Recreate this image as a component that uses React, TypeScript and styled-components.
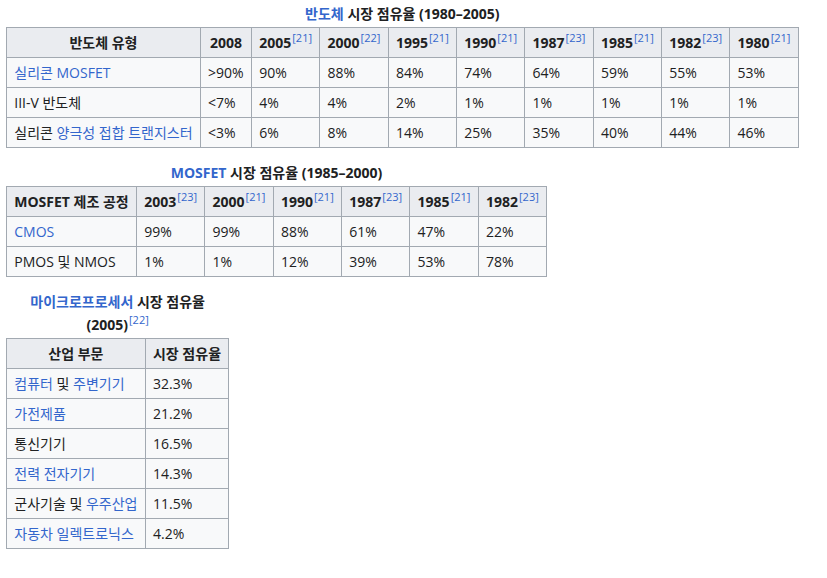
import styled, { createGlobalStyle } from "styled-components";

const GlobalStyle = createGlobalStyle`
  body {
    margin: 0;
    background: #ffffff;
    color: #202122;
    font-family: "Open Sans", "Noto Sans CJK KR", sans-serif;
    font-size: 14px;
  }
`;

const Page = styled.div`
  padding: 2px 6px 0;
  display: flex;
  flex-direction: column;
  align-items: flex-start;
  gap: 13px;
`;

const Table = styled.table`
  border-collapse: collapse;
  background: #f8f9fa;
  color: #202122;
  border: 1px solid #a2a9b1;
`;

const Caption = styled.caption`
  font-weight: bold;
  line-height: 23px;
  padding-bottom: 2px;
  text-align: center;
`;

const CaptionLine = styled.span`
  display: block;
  white-space: nowrap;
`;

const Th = styled.th`
  background: #eaecf0;
  border: 1px solid #a2a9b1;
  padding: 4px 7.25px;
  line-height: 21px;
  text-align: center;
  font-weight: bold;
  white-space: nowrap;
`;

const Td = styled.td`
  border: 1px solid #a2a9b1;
  padding: 4px 7.25px;
  line-height: 21px;
  text-align: left;
  white-space: nowrap;
`;

const Link = styled.span`
  color: #3366cc;
`;

const Ref = styled.sup`
  color: #3366cc;
  font-size: 11px;
  font-weight: normal;
  line-height: 1;
  vertical-align: super;
  margin-left: 1px;
`;

type Label = { text: string; link?: boolean }[];

const Cell = ({ parts }: { parts: Label }) => (
  <>
    {parts.map((p, i) =>
      p.link ? <Link key={i}>{p.text}</Link> : <span key={i}>{p.text}</span>
    )}
  </>
);

const Year = ({ year, refNo }: { year: string; refNo?: string }) => (
  <>
    {year}
    {refNo && <Ref>[{refNo}]</Ref>}
  </>
);

const semiYears = [
  ["2008", ""],
  ["2005", "21"],
  ["2000", "22"],
  ["1995", "21"],
  ["1990", "21"],
  ["1987", "23"],
  ["1985", "21"],
  ["1982", "23"],
  ["1980", "21"],
];

const semiRows: { label: Label; values: string[] }[] = [
  {
    label: [{ text: "실리콘 MOSFET", link: true }],
    values: [">90%", "90%", "88%", "84%", "74%", "64%", "59%", "55%", "53%"],
  },
  {
    label: [{ text: "III-V 반도체" }],
    values: ["<7%", "4%", "4%", "2%", "1%", "1%", "1%", "1%", "1%"],
  },
  {
    label: [{ text: "실리콘 " }, { text: "양극성 접합 트랜지스터", link: true }],
    values: ["<3%", "6%", "8%", "14%", "25%", "35%", "40%", "44%", "46%"],
  },
];

const mosYears = [
  ["2003", "23"],
  ["2000", "21"],
  ["1990", "21"],
  ["1987", "23"],
  ["1985", "21"],
  ["1982", "23"],
];

const mosRows: { label: Label; values: string[] }[] = [
  {
    label: [{ text: "CMOS", link: true }],
    values: ["99%", "99%", "88%", "61%", "47%", "22%"],
  },
  {
    label: [{ text: "PMOS 및 NMOS" }],
    values: ["1%", "1%", "12%", "39%", "53%", "78%"],
  },
];

const cpuRows: { label: Label; value: string }[] = [
  {
    label: [
      { text: "컴퓨터", link: true },
      { text: " 및 " },
      { text: "주변기기", link: true },
    ],
    value: "32.3%",
  },
  { label: [{ text: "가전제품", link: true }], value: "21.2%" },
  { label: [{ text: "통신기기" }], value: "16.5%" },
  { label: [{ text: "전력 전자기기", link: true }], value: "14.3%" },
  {
    label: [{ text: "군사기술 및 " }, { text: "우주산업", link: true }],
    value: "11.5%",
  },
  { label: [{ text: "자동차 일렉트로닉스", link: true }], value: "4.2%" },
];

export default function App() {
  return (
    <>
      <GlobalStyle />
      <Page>
        <Table>
          <Caption>
            <Link>반도체</Link> 시장 점유율 (1980–2005)
          </Caption>
          <thead>
            <tr>
              <Th>반도체 유형</Th>
              {semiYears.map(([y, r]) => (
                <Th key={y}>
                  <Year year={y} refNo={r} />
                </Th>
              ))}
            </tr>
          </thead>
          <tbody>
            {semiRows.map((row, i) => (
              <tr key={i}>
                <Td>
                  <Cell parts={row.label} />
                </Td>
                {row.values.map((v, j) => (
                  <Td key={j}>{v}</Td>
                ))}
              </tr>
            ))}
          </tbody>
        </Table>

        <Table>
          <Caption>
            <Link>MOSFET</Link> 시장 점유율 (1985–2000)
          </Caption>
          <thead>
            <tr>
              <Th>MOSFET 제조 공정</Th>
              {mosYears.map(([y, r]) => (
                <Th key={y}>
                  <Year year={y} refNo={r} />
                </Th>
              ))}
            </tr>
          </thead>
          <tbody>
            {mosRows.map((row, i) => (
              <tr key={i}>
                <Td>
                  <Cell parts={row.label} />
                </Td>
                {row.values.map((v, j) => (
                  <Td key={j}>{v}</Td>
                ))}
              </tr>
            ))}
          </tbody>
        </Table>

        <Table>
          <Caption>
            <CaptionLine>
              <Link>마이크로프로세서</Link> 시장 점유율
            </CaptionLine>
            <CaptionLine>
              (2005)<Ref>[22]</Ref>
            </CaptionLine>
          </Caption>
          <thead>
            <tr>
              <Th>산업 부문</Th>
              <Th>시장 점유율</Th>
            </tr>
          </thead>
          <tbody>
            {cpuRows.map((row, i) => (
              <tr key={i}>
                <Td>
                  <Cell parts={row.label} />
                </Td>
                <Td>{row.value}</Td>
              </tr>
            ))}
          </tbody>
        </Table>
      </Page>
    </>
  );
}
